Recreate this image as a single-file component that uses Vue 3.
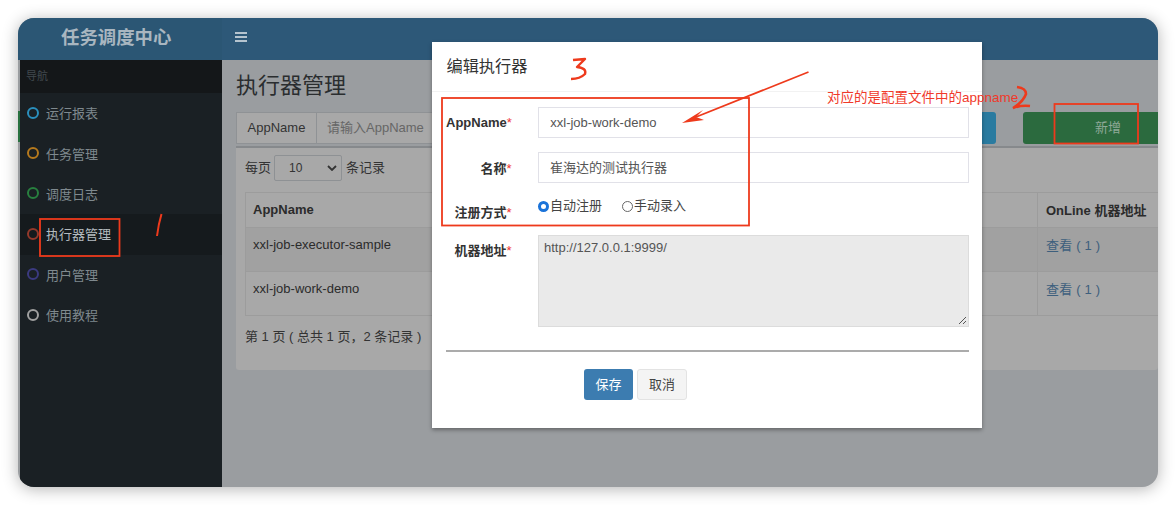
<template>
  <div class="page">
    <div class="window">
      <aside class="sidebar">
        <div class="logo">任务调度中心</div>
        <div class="side-body">
          <div class="nav-title">导航</div>
          <ul class="nav">
            <li v-for="item in navItems" :key="item.name" class="nav-item" :class="{ active: item.active }">
              <span class="ring" :style="{ borderColor: item.color }"></span>
              <span>{{ item.name }}</span>
            </li>
          </ul>
        </div>
      </aside>

      <div class="main">
        <header class="topbar">
          <span class="burger"><i></i><i></i><i></i></span>
        </header>
        <section class="content">
          <h1 class="page-title">执行器管理</h1>
          <div class="filters">
            <div class="search-group">
              <span class="addon">AppName</span>
              <span class="search-input">请输入AppName</span>
            </div>
            <span class="btn-search"></span>
            <span class="btn-add">新增</span>
          </div>
          <div class="box">
            <div class="page-size">
              <span class="size-label">每页</span>
              <span class="select">10
                <svg width="10" height="6" viewBox="0 0 10 6"><path d="M1 1l4 4 4-4" fill="none" stroke="#333" stroke-width="1.8" /></svg>
              </span>
              <span class="size-label records">条记录</span>
            </div>
            <table class="table">
              <colgroup>
                <col style="width: 660px" />
                <col style="width: 132px" />
                <col />
              </colgroup>
              <thead>
                <tr><th>AppName</th><th></th><th>OnLine 机器地址</th></tr>
              </thead>
              <tbody>
                <tr v-for="row in rows" :key="row">
                  <td>{{ row }}</td>
                  <td></td>
                  <td class="link">查看 ( 1 )</td>
                </tr>
              </tbody>
            </table>
            <p class="summary">第 1 页 ( 总共 1 页，2 条记录 )</p>
          </div>
        </section>
      </div>

      <div class="modal">
        <div class="modal-head">编辑执行器</div>
        <div class="modal-body">
          <div class="field">
            <label>AppName<em>*</em></label>
            <div class="control">xxl-job-work-demo</div>
          </div>
          <div class="field">
            <label>名称<em>*</em></label>
            <div class="control">崔海达的测试执行器</div>
          </div>
          <div class="field radios">
            <label>注册方式<em>*</em></label>
            <div class="radio-row">
              <span class="radio"><i class="dot on"></i>自动注册</span>
              <span class="radio"><i class="dot"></i>手动录入</span>
            </div>
          </div>
          <div class="field address">
            <label>机器地址<em>*</em></label>
            <div class="textarea">
              http://127.0.0.1:9999/
              <svg class="grip" width="9" height="9" viewBox="0 0 9 9"><path d="M1 8l7-7M5 8l3-3" stroke="#555" stroke-width="1" /></svg>
            </div>
          </div>
          <hr class="rule" />
          <div class="actions">
            <span class="btn-save">保存</span>
            <span class="btn-cancel">取消</span>
          </div>
        </div>
      </div>
    </div>

    <!-- 截图上的红色标注 -->
    <svg class="marks" width="1176" height="505" viewBox="0 0 1176 505" fill="none" stroke="#ee3a1c">
      <rect x="40" y="219" width="79.5" height="37" stroke-width="1.8" />
      <rect x="442" y="98" width="307" height="127.5" stroke-width="1.8" />
      <rect x="1054.5" y="104" width="83.5" height="39.5" stroke-width="1.8" />
      <path d="M161.5 214q-3 10-4.500 22" stroke-width="2" />
      <path d="M573 60L585 59L577 67Q587 68 585 74Q580 79 571 79" stroke-width="2.4" stroke-linejoin="round" />
      <path d="M1017 87Q1026 88 1026 94Q1023 102 1013 108Q1021 105 1030 106" stroke-width="2.6" />
      <path d="M808.500 72L696 117" stroke-width="1.8" />
      <path d="M682 123L703 110L696 117L704 120z" fill="#ee3a1c" stroke="none" />
    </svg>
    <span class="note">对应的是配置文件中的appname</span>
  </div>
</template>

<script setup>
const navItems = [
  { name: '运行报表', color: '#2a8fbd' },
  { name: '任务管理', color: '#b5791d' },
  { name: '调度日志', color: '#28803f' },
  { name: '执行器管理', color: '#93392b', active: true },
  { name: '用户管理', color: '#3b3a80' },
  { name: '使用教程', color: '#a0a0a0' }
]

const rows = ['xxl-job-executor-sample', 'xxl-job-work-demo']
</script>

<style>
html,
body {
  margin: 0;
  background: #fff;
}
</style>

<style scoped>
.page {
  position: relative;
  width: 1176px;
  height: 505px;
  padding: 18px;
  box-sizing: border-box;
  overflow: hidden;
  font-family: "Liberation Sans", "Noto Sans CJK SC", sans-serif;
  font-size: 13px;
  color: #2b2b2b;
}

.window {
  position: relative;
  display: flex;
  height: 469px;
  border-radius: 16px;
  overflow: hidden;
  background: #9a9da0;
  box-shadow: 0 2px 16px rgba(0, 0, 0, 0.3);
}

.sidebar {
  position: relative;
  flex: 0 0 204px;
  display: flex;
  flex-direction: column;
}

.sidebar::before {
  content: "";
  position: absolute;
  left: 0;
  top: 93px;
  width: 2px;
  height: 31px;
  background: #28703f;
}

.logo {
  height: 42px;
  line-height: 39px;
  padding-left: 43px;
  background: #2b5674;
  color: #a9b6c0;
  font-size: 18.4px;
  font-weight: 700;
}

.side-body {
  flex: 1;
  margin-left: 2px;
  background: #1a2024;
}

.nav-title {
  height: 33px;
  line-height: 33px;
  padding-left: 6px;
  background: #141719;
  color: #41494e;
  font-size: 11px;
}

.nav {
  margin: 0;
  padding: 0;
  list-style: none;
}

.nav-item {
  display: flex;
  align-items: center;
  gap: 7px;
  height: 40.4px;
  padding: 0 0 1px 7px;
  box-sizing: border-box;
  color: #7f898e;
}

.nav-item.active {
  background: #151a1d;
  color: #b4bcc0;
}

.ring {
  width: 8px;
  height: 8px;
  border: 2px solid;
  border-radius: 50%;
}

.main {
  flex: 1;
  min-width: 0;
  display: flex;
  flex-direction: column;
}

.topbar {
  flex: 0 0 42px;
  display: flex;
  align-items: center;
  padding-left: 13px;
  background: #2d5878;
}

.burger {
  display: flex;
  flex-direction: column;
  gap: 2px;
  margin-top: -5px;
}

.burger i {
  display: block;
  width: 12px;
  height: 2px;
  background: #b5c4cf;
}

.content {
  padding: 0 0 0 14px;
  min-width: 0;
}

.page-title {
  margin: 11px 0 0;
  height: 41px;
  line-height: 29px;
  font-size: 22px;
  font-weight: 400;
  color: #2a2d2f;
}

.filters {
  display: flex;
  height: 32px;
}

.search-group {
  display: flex;
  width: 746px;
  border: 1px solid #8f9295;
  border-right: 0;
  box-sizing: border-box;
  background: #a8a8a8;
}

.addon {
  width: 79px;
  line-height: 30px;
  text-align: center;
  border-right: 1px solid #8f9295;
  color: #333;
}

.search-input {
  padding-left: 10px;
  line-height: 30px;
  color: #666;
}

.btn-search {
  width: 14px;
  background: #2a7ba0;
  border-radius: 0 3px 3px 0;
}

.btn-add {
  flex: 1;
  margin-left: 27px;
  padding-left: 72px;
  line-height: 31px;
  background: #2b6a3e;
  border-radius: 3px 0 0 3px;
  color: #8fa998;
}

.box {
  margin-top: 2px;
  height: 224px;
  box-sizing: border-box;
  border-top: 2px solid #86898c;
  border-radius: 0 0 3px 3px;
  padding: 7px 0 0 9px;
  background: #a8a8a8;
}

.page-size {
  display: flex;
  align-items: center;
  gap: 3px;
  height: 26px;
  color: #333;
}

.size-label {
  padding-bottom: 3px;
}

.records {
  margin-left: 1px;
}

.select {
  display: flex;
  align-items: center;
  justify-content: space-between;
  width: 68px;
  height: 26px;
  padding: 0 4px 0 14px;
  box-sizing: border-box;
  border: 1px solid #8e9194;
  border-radius: 2px;
  font-size: 12px;
}

.table {
  margin-top: 11px;
  width: 920px;
  table-layout: fixed;
  border-collapse: collapse;
}

.table th,
.table td {
  border: 1px solid #9c9c9c;
  padding: 0 7px 0 8px;
  text-align: left;
  color: #2b2b2b;
}

.table th:first-child,
.table td:first-child {
  padding-left: 7px;
}

.table th {
  height: 32px;
  padding-bottom: 2px;
  font-size: 13px;
}

.table td {
  height: 32px;
  padding-bottom: 11px;
}

.table tbody tr:first-child {
  background: #a1a1a1;
}

.table td.link {
  color: #3d5f7d;
  letter-spacing: 0.2px;
}

.summary {
  margin: 10px 0 0;
  color: #333;
}

.modal {
  position: absolute;
  left: 414px;
  top: 24px;
  width: 550px;
  height: 386px;
  background: #fff;
  box-shadow: 0 2px 4px rgba(0, 0, 0, 0.35);
}

.modal-head {
  height: 50px;
  line-height: 49px;
  padding-left: 14.500px;
  box-sizing: border-box;
  border-bottom: 1px solid #f2f2f2;
  font-size: 16.2px;
  color: #333;
}

.modal-body {
  padding: 15px 13px 0 14px;
}

.field {
  display: flex;
  align-items: center;
  margin-bottom: 14px;
}

.field label {
  flex: 0 0 65.5px;
  margin-right: 26.5px;
  text-align: right;
  font-size: 13px;
  font-weight: 700;
  color: #333;
}

.field em {
  color: #e33;
  font-style: normal;
  font-weight: 400;
}

.control {
  flex: 1;
  height: 31px;
  line-height: 29px;
  padding-left: 11px;
  box-sizing: border-box;
  border: 1px solid #e1e1e8;
  color: #555;
}

.radios {
  align-items: flex-start;
  margin-bottom: 14px;
}

.radios label {
  margin-top: 5px;
}

.radio-row {
  display: flex;
  gap: 20px;
  color: #444;
}

.radio {
  display: flex;
  align-items: center;
  line-height: 18px;
}

.dot {
  width: 9px;
  height: 9px;
  margin-right: 1px;
  border: 1px solid #666;
  border-radius: 50%;
}

.dot.on {
  width: 5px;
  height: 5px;
  border: 3px solid #1a73d9;
  outline: 0;
  background: #fff;
}

.address {
  align-items: flex-start;
  margin-bottom: 23px;
}

.address label {
  margin-top: 5px;
}

.textarea {
  position: relative;
  flex: 1;
  height: 92px;
  padding: 4px 5px;
  box-sizing: border-box;
  border: 1px solid #dcdcdc;
  background: #eaeaea;
  color: #555;
}

.grip {
  position: absolute;
  right: 1px;
  bottom: 1px;
}

.rule {
  margin: 0 0 17px;
  border: 0;
  height: 2px;
  background: #ababab;
}

.actions {
  display: flex;
  gap: 4px;
  margin-left: 138px;
}

.btn-save,
.btn-cancel {
  width: 49px;
  height: 31px;
  line-height: 31px;
  text-align: center;
  box-sizing: border-box;
  border-radius: 3px;
}

.btn-save {
  background: #3c7cb0;
  color: #fff;
}

.btn-cancel {
  width: 50px;
  line-height: 29px;
  border: 1px solid #e3e3e3;
  background: #f4f4f4;
  color: #444;
}

.marks {
  position: absolute;
  left: 0;
  top: 0;
  pointer-events: none;
}

.note {
  position: absolute;
  left: 827px;
  top: 89px;
  line-height: 18px;
  color: #f0392a;
  font-size: 13.5px;
}
</style>
